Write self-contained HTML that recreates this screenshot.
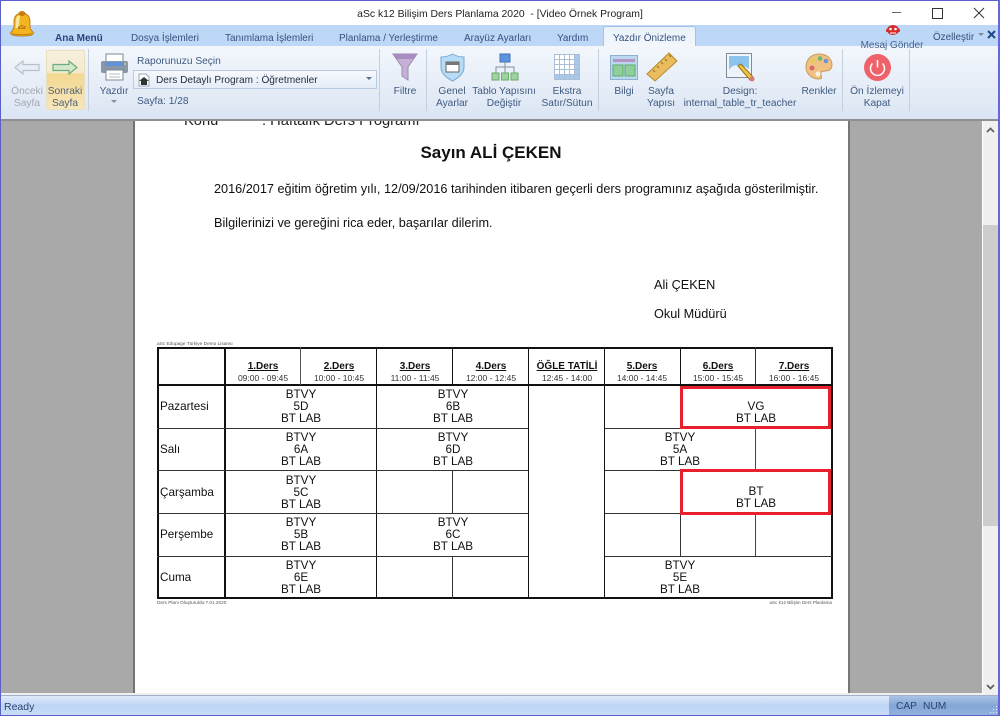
<!DOCTYPE html>
<html lang="tr"><head><meta charset="utf-8"><title>aSc k12</title>
<style>
html,body{margin:0;padding:0;background:#fff}
#w{position:relative;width:1000px;height:716px;overflow:hidden;background:#fff;font-family:"Liberation Sans",sans-serif}
#w div,#w svg{position:absolute}
.t{white-space:nowrap;font-size:10.2px;line-height:12px;color:#3f5a80;margin-top:1px}
.c{transform:translateX(-50%);text-align:center}
.tab{top:33px;font-size:9.95px;line-height:12px;color:#35527d;white-space:nowrap}
.sep{width:1px;background:#c3cfdf;top:49px;height:62px}
.p{color:#111;white-space:nowrap;font-size:12.7px;line-height:14px;margin-top:1px}
.hd{font-weight:bold;text-decoration:underline;font-size:10px;line-height:12px;color:#111;white-space:nowrap;margin-top:1px}
.tm{font-size:8.5px;line-height:10px;color:#333;white-space:nowrap}
.cell{font-size:11.7px;line-height:12px;color:#111;text-align:center;white-space:nowrap;transform:translateX(-50%);margin-top:1px}
.day{font-size:11.7px;line-height:14px;color:#111;left:160px;margin-top:1px}
.bh{background:#111;height:1px}
.bv{background:#111;width:1px}
</style></head><body><div id="w">
<!-- title bar -->
<div style="left:0;top:0;width:1000px;height:25px;background:#fff"></div>
<div class="t" style="left:500px;top:8px;font-size:10.4px;color:#222;transform:translateX(-50%)">aSc k12 Bilişim Ders Planlama 2020&nbsp; - [Video Örnek Program]</div>
<div style="left:892px;top:12px;width:9px;height:1px;background:#666"></div>
<div style="left:932px;top:8px;width:9px;height:9px;border:1px solid #333"></div>
<svg style="left:973px;top:7px" width="12" height="12"><path d="M1 1L11 11M11 1L1 11" stroke="#333" stroke-width="1" fill="none"/></svg>
<!-- tab row -->
<div style="left:1px;top:25px;width:997px;height:21px;background:#bdd7f7"></div>
<!-- ribbon -->
<div style="left:1px;top:46px;width:997px;height:73px;background:linear-gradient(#f3f7fc,#dbe5f3)"></div>
<div style="left:1px;top:119px;width:997px;height:2px;background:#8d8f93"></div>
<!-- active tab -->
<div style="left:603px;top:26px;width:93px;height:20px;background:linear-gradient(#e9f2fc,#f3f7fc);border:1px solid #a7c1e0;border-bottom:none;border-radius:3px 3px 0 0;box-sizing:border-box"></div>
<div class="tab" style="left:55px;font-weight:bold;color:#27477c;font-size:10px">Ana Menü</div>
<div class="tab" style="left:131px">Dosya İşlemleri</div>
<div class="tab" style="left:225px">Tanımlama İşlemleri</div>
<div class="tab" style="left:339px">Planlama / Yerleştirme</div>
<div class="tab" style="left:464px">Arayüz Ayarları</div>
<div class="tab" style="left:557px">Yardım</div>
<div class="tab" style="left:613px">Yazdır Önizleme</div>
<div class="t c" style="left:892px;top:39px;color:#46638c;font-size:10px">Mesaj Gönder</div>
<div class="t" style="left:933px;top:31px;color:#35527d;font-size:9.9px">Özelleştir</div>
<svg style="left:978px;top:33px" width="6" height="4"><path d="M0 0H6L3 3Z" fill="#7a8ba5"/></svg>
<svg style="left:987px;top:30px" width="9" height="9"><path d="M1 1L8 8M8 1L1 8" stroke="#1d4a8c" stroke-width="2"/></svg>
<!-- bell -->
<svg style="left:10px;top:11px" width="24" height="26" viewBox="0 0 24 26"><path d="M12 .5C10 .5 9 1.500 8.500 3C5 4 4 7 4 11V16C4 18.500 2 20 .5 21.500C.5 24.500 5 25 12 25S23.500 24.500 23.500 21.500C22 20 20 18.500 20 16V11C20 7 19 4 15.500 3C15 1.500 14 .5 12 .5Z" fill="#f4b41f" stroke="#b56f06" stroke-width=".8"/><path d="M6 9C6 6 8 4.500 10 4.500L8.500 17H5.500Z" fill="#fde79a"/><ellipse cx="12" cy="3" rx="3" ry="2" fill="#c27c10"/><path d="M2 22.500C6 24 18 24 22 22.500" stroke="#c98410" fill="none"/><text x="12" y="18" font-size="5" text-anchor="middle" fill="#7a4a08" font-family="Liberation Sans">aSc</text></svg>
<!-- Önceki/Sonraki -->
<div style="left:46px;top:50px;width:39px;height:60px;border:1px solid #e9dfbe;box-sizing:border-box;border-radius:2px;background:linear-gradient(#f6f0dd 0,#f3eacc 38%,#f4d890 39%,#f6e6bc 100%)"></div>
<svg style="left:14px;top:60px" width="26" height="15"><path d="M1 7.500L9 1V4.500H25V10.500H9V14Z" fill="#e8edf3" stroke="#b6c1cc" stroke-width="1.200"/></svg>
<svg style="left:52px;top:60px" width="26" height="15"><path d="M25 7.500L17 1V4.500H1V10.500H17V14Z" fill="#d3e7cb" stroke="#6cab83" stroke-width="1.200"/></svg>
<div class="t c" style="left:27px;top:85px;color:#a3a9b0">Önceki</div>
<div class="t c" style="left:27px;top:97px;color:#a3a9b0">Sayfa</div>
<div class="t c" style="left:65px;top:85px;color:#50627a">Sonraki</div>
<div class="t c" style="left:65px;top:97px;color:#50627a">Sayfa</div>
<div class="sep" style="left:88px"></div>
<!-- printer -->
<svg style="left:100px;top:53px" width="29" height="29" viewBox="0 0 29 29"><rect x="6" y="1" width="17" height="9" fill="#fff" stroke="#7e8a98"/><rect x="1" y="8" width="27" height="12" rx="2" fill="#8a97a7"/><rect x="5" y="9" width="19" height="4" fill="#5f93d8"/><circle cx="25" cy="11" r="1" fill="#e8d058"/><rect x="6" y="17" width="17" height="10" fill="#fff" stroke="#7e8a98"/><path d="M9 21H20M9 24H20" stroke="#b4bcc6"/></svg>
<div class="t c" style="left:114px;top:85px">Yazdır</div>
<svg style="left:111px;top:100px" width="6" height="4"><path d="M0 0H6L3 3Z" fill="#7d8da5"/></svg>
<div class="t" style="left:137px;top:55px">Raporunuzu Seçin</div>
<div style="left:133px;top:70px;width:244px;height:19px;background:linear-gradient(#f7f9fd,#e6edf7);border:1px solid #b9cbe2;box-sizing:border-box"></div>
<svg style="left:137px;top:73px" width="14" height="14"><path d="M2 1H9L12 4V13H2Z" fill="#fff" stroke="#9aa8bc"/><path d="M7 4L12 8H10V12H4V8H2Z" fill="#333"/></svg>
<div class="t" style="left:156px;top:74px;color:#1e2b40;font-size:10.1px">Ders Detaylı Program : Öğretmenler</div>
<svg style="left:366px;top:77px" width="6" height="4"><path d="M0 0H6L3 3Z" fill="#5d7291"/></svg>
<div class="t" style="left:137px;top:95px">Sayfa: 1/28</div>
<div class="sep" style="left:379px"></div>
<!-- filtre -->
<svg style="left:391px;top:53px" width="28" height="28"><path d="M2 1H26L17 14V27L11 23V14Z" fill="#c5b0d6" stroke="#9c8ab0"/><path d="M2 1H26L22 6H6Z" fill="#a98cc2"/></svg>
<div class="t c" style="left:405px;top:85px">Filtre</div>
<div class="sep" style="left:426px"></div>
<!-- genel -->
<svg style="left:440px;top:53px" width="25" height="29"><path d="M12.500 1C9 3 5 4 1 4V14C1 21 7 25 12.500 28C18 25 24 21 24 14V4C20 4 16 3 12.500 1Z" fill="#b7dcf5" stroke="#78a6cc"/><rect x="6" y="9" width="13" height="10" fill="#fff" stroke="#666"/><rect x="6" y="9" width="13" height="3" fill="#777"/></svg>
<div class="t c" style="left:452px;top:85px">Genel</div>
<div class="t c" style="left:452px;top:97px">Ayarlar</div>
<!-- tablo -->
<svg style="left:491px;top:53px" width="28" height="28"><rect x="9" y="1" width="10" height="8" fill="#5b93dd" stroke="#3f72b8"/><path d="M14 9V14M5 20V14H23V20M14 14V20" stroke="#8a8f96" fill="none"/><rect x="1" y="20" width="7" height="7" fill="#9fd39f" stroke="#6aaa6a"/><rect x="10.500" y="20" width="7" height="7" fill="#9fd39f" stroke="#6aaa6a"/><rect x="20" y="20" width="7" height="7" fill="#9fd39f" stroke="#6aaa6a"/></svg>
<div class="t c" style="left:504px;top:85px">Tablo Yapısını</div>
<div class="t c" style="left:504px;top:97px">Değiştir</div>
<!-- ekstra -->
<svg style="left:554px;top:54px" width="26" height="26"><rect width="26" height="26" fill="#fff"/><rect x="20" width="6" height="26" fill="#aac8ea"/><rect y="20" width="26" height="6" fill="#aac8ea"/><path d="M.5 0V26M5.500 0V26M10.500 0V26M15.500 0V26M20.500 0V26M25.500 0V26M0 .5H26M0 5.500H26M0 10.500H26M0 15.500H26M0 20.500H26M0 25.500H26" stroke="#a9bfd8" fill="none"/></svg>
<div class="t c" style="left:567px;top:85px">Ekstra</div>
<div class="t c" style="left:567px;top:97px">Satır/Sütun</div>
<div class="sep" style="left:598px"></div>
<!-- bilgi -->
<svg style="left:610px;top:55px" width="28" height="25"><rect x=".5" y=".5" width="27" height="24" fill="#bcd8ef" stroke="#8db1d2"/><rect x="3" y="4" width="22" height="3" fill="#b494c5"/><rect x="3" y="10" width="10" height="11" fill="#8fd09a" stroke="#5fa870"/><rect x="15" y="10" width="10" height="11" fill="#8fd09a" stroke="#5fa870"/></svg>
<div class="t c" style="left:624px;top:85px">Bilgi</div>
<!-- sayfa -->
<svg style="left:646px;top:52px" width="32" height="30"><path d="M1 22L23 1L31 9L9 29Z" fill="#e9bd5e" stroke="#b98a2c"/><path d="M7 18L9 20M11 14L13 16M15 10L17 12M19 7L21 9M23 3L25 5" stroke="#8b6a20"/></svg>
<div class="t c" style="left:661px;top:85px">Sayfa</div>
<div class="t c" style="left:661px;top:97px">Yapısı</div>
<!-- design -->
<svg style="left:726px;top:53px" width="30" height="30"><rect x=".5" y=".5" width="25" height="24" fill="#f3f5f8" stroke="#818b97"/><rect x="3" y="3" width="20" height="19" fill="#8cc4ee"/><path d="M3 17C8 10 12 12 15 15C18 12 20 14 23 16V22H3Z" fill="#eef3f8"/><path d="M12 13L15 11L27 24L24 27Z" fill="#f0c340" stroke="#8d7420"/><circle cx="26" cy="26" r="2.500" fill="#d97a72"/></svg>
<div class="t c" style="left:740px;top:85px">Design:</div>
<div class="t c" style="left:740px;top:97px">internal_table_tr_teacher</div>
<!-- renkler -->
<svg style="left:805px;top:53px" width="28" height="27"><path d="M14 1C6 1 1 7 1 14C1 21 7 26 14 26C17 26 17 24 16 22C15 19 17 18 20 18C24 18 27 16 27 12C27 5 21 1 14 1Z" fill="#efc283" stroke="#c99a58"/><circle cx="7" cy="15" r="2.500" fill="#d66"/><circle cx="8" cy="8" r="2.300" fill="#e4cf54"/><circle cx="15" cy="5.500" r="2.300" fill="#6bb86b"/><circle cx="21" cy="8" r="2.300" fill="#6a94d8"/><circle cx="13" cy="21" r="2.500" fill="#f5f2e8"/></svg>
<div class="t c" style="left:819px;top:85px">Renkler</div>
<div class="sep" style="left:842px"></div>
<!-- kapat -->
<svg style="left:864px;top:54px" width="27" height="27"><circle cx="13.500" cy="13.500" r="13.500" fill="#f0626a"/><path d="M8.500 9.500A7 7 0 1 0 18.500 9.500" stroke="#fff" stroke-width="1.500" fill="none"/><path d="M13.500 6V13.500" stroke="#fff" stroke-width="1.500"/></svg>
<div class="t c" style="left:877px;top:85px">Ön İzlemeyi</div>
<div class="t c" style="left:877px;top:97px">Kapat</div>
<div class="sep" style="left:909px"></div>
<!-- mesaj icon -->
<svg style="left:885px;top:24px" width="16" height="12"><ellipse cx="8" cy="6" rx="6" ry="5" fill="#d62b2b"/><rect x="1" y="5" width="14" height="3" rx="1" fill="#d62b2b"/><circle cx="5.500" cy="5" r="1.300" fill="#fff"/><circle cx="10.500" cy="5" r="1.300" fill="#fff"/><path d="M5 9H11" stroke="#fff"/></svg>
<!-- work area -->
<div style="left:1px;top:121px;width:981px;height:572px;background:#a9a9a9"></div>
<div style="left:133px;top:121px;width:2px;height:572px;background:#737373"></div>
<div style="left:135px;top:121px;width:713px;height:572px;background:#fff"></div>
<div style="left:848px;top:121px;width:2px;height:572px;background:#767676"></div>
<div style="left:1px;top:693px;width:981px;height:2px;background:#f0f0f0"></div>
<!-- scrollbar -->
<div style="left:982px;top:121px;width:16px;height:574px;background:#f0f0f0;border-left:1px solid #fff;box-sizing:border-box"></div>
<div style="left:983px;top:225px;width:15px;height:301px;background:#cdcdcd"></div>
<svg style="left:986px;top:127px" width="9" height="6"><path d="M1 5L4.500 1.500L8 5" stroke="#606060" stroke-width="1.700" fill="none"/></svg>
<svg style="left:986px;top:684px" width="9" height="6"><path d="M1 1L4.500 4.500L8 1" stroke="#606060" stroke-width="1.700" fill="none"/></svg>
<!-- page text: clipped top line -->
<div style="left:135px;top:121px;width:713px;height:20px;overflow:hidden">
<div style="left:49px;top:-8px;font-size:14.7px;line-height:16px;color:#222;white-space:nowrap">Konu</div>
<div style="left:127px;top:-8px;font-size:14.7px;line-height:16px;color:#222;white-space:nowrap">: Haftalık Ders Programı</div>
</div>
<div style="left:491px;top:144px;transform:translateX(-50%);font-size:17px;line-height:18px;font-weight:bold;color:#111;white-space:nowrap">Sayın ALİ ÇEKEN</div>
<div class="p" style="left:214px;top:181px">2016/2017 eğitim öğretim yılı, 12/09/2016 tarihinden itibaren geçerli ders programınız aşağıda gösterilmiştir.</div>
<div class="p" style="left:214px;top:215px">Bilgilerinizi ve gereğini rica eder, başarılar dilerim.</div>
<div class="p" style="left:654px;top:277px">Ali ÇEKEN</div>
<div class="p" style="left:654px;top:306px">Okul Müdürü</div>
<div style="left:157px;top:342px;font-size:4.75px;line-height:5px;color:#555;white-space:nowrap">aSc Edupage Türkiye Demo Lisansı</div>
<div style="left:157px;top:600px;font-size:4.7px;line-height:5px;color:#555;white-space:nowrap">Ders Planı Oluşturuldu:7.01.2020</div>
<div style="left:832px;top:600px;font-size:4.6px;line-height:5px;color:#555;white-space:nowrap;transform:translateX(-100%)">aSc k12 Bilişim Ders Planlama</div>
<!-- table lines -->
<div style="left:157px;top:347px;width:676px;height:252px;border:2px solid #111;box-sizing:border-box"></div>
<div class="bh" style="left:157px;top:384px;width:675px;height:2px"></div>
<div class="bv" style="left:224px;top:347px;height:252px;width:2px"></div>
<div class="bv" style="left:300px;top:347px;height:38px;background:#555"></div>
<div class="bv" style="left:376px;top:347px;height:252px"></div>
<div class="bv" style="left:452px;top:347px;height:38px"></div>
<div class="bv" style="left:452px;top:470px;height:43px;background:#333"></div>
<div class="bv" style="left:452px;top:556px;height:43px;background:#333"></div>
<div class="bv" style="left:528px;top:347px;height:252px"></div>
<div class="bv" style="left:604px;top:347px;height:252px"></div>
<div class="bv" style="left:680px;top:347px;height:38px"></div>
<div class="bv" style="left:680px;top:513px;height:43px;background:#333"></div>
<div class="bv" style="left:755px;top:347px;height:38px;background:#333"></div>
<div class="bv" style="left:755px;top:428px;height:42px;background:#444"></div>
<div class="bv" style="left:755px;top:513px;height:43px;background:#444"></div>
<div class="bh" style="left:157px;top:428px;width:371px;background:#333"></div>
<div class="bh" style="left:605px;top:428px;width:227px;background:#333"></div>
<div class="bh" style="left:157px;top:470px;width:371px;background:#333"></div>
<div class="bh" style="left:605px;top:470px;width:227px;background:#333"></div>
<div class="bh" style="left:157px;top:513px;width:371px;background:#333"></div>
<div class="bh" style="left:605px;top:513px;width:227px;background:#333"></div>
<div class="bh" style="left:157px;top:556px;width:371px;background:#333"></div>
<div class="bh" style="left:605px;top:556px;width:227px;background:#333"></div>
<!-- red boxes -->
<div style="left:680px;top:386px;width:151px;height:43px;border:3px solid #e8202e;box-sizing:border-box"></div>
<div style="left:680px;top:469px;width:151px;height:46px;border:3px solid #e8202e;box-sizing:border-box"></div>
<!-- header -->
<div class="hd c" style="left:263px;top:360px">1.Ders</div><div class="tm c" style="left:263px;top:373px">09:00 - 09:45</div>
<div class="hd c" style="left:339px;top:360px">2.Ders</div><div class="tm c" style="left:339px;top:373px">10:00 - 10:45</div>
<div class="hd c" style="left:415px;top:360px">3.Ders</div><div class="tm c" style="left:415px;top:373px">11:00 - 11:45</div>
<div class="hd c" style="left:491px;top:360px">4.Ders</div><div class="tm c" style="left:491px;top:373px">12:00 - 12:45</div>
<div class="hd c" style="left:567px;top:360px">ÖĞLE TATİLİ</div><div class="tm c" style="left:567px;top:373px">12:45 - 14:00</div>
<div class="hd c" style="left:642px;top:360px">5.Ders</div><div class="tm c" style="left:642px;top:373px">14:00 - 14:45</div>
<div class="hd c" style="left:718px;top:360px">6.Ders</div><div class="tm c" style="left:718px;top:373px">15:00 - 15:45</div>
<div class="hd c" style="left:794px;top:360px">7.Ders</div><div class="tm c" style="left:794px;top:373px">16:00 - 16:45</div>
<!-- days -->
<div class="day" style="top:399px">Pazartesi</div>
<div class="day" style="top:442px">Salı</div>
<div class="day" style="top:485px">Çarşamba</div>
<div class="day" style="top:527px">Perşembe</div>
<div class="day" style="top:570px">Cuma</div>
<!-- cells -->
<div class="cell" style="left:301px;top:388px">BTVY<br>5D<br>BT LAB</div>
<div class="cell" style="left:453px;top:388px">BTVY<br>6B<br>BT LAB</div>
<div class="cell" style="left:756px;top:400px">VG<br>BT LAB</div>
<div class="cell" style="left:301px;top:431px">BTVY<br>6A<br>BT LAB</div>
<div class="cell" style="left:453px;top:431px">BTVY<br>6D<br>BT LAB</div>
<div class="cell" style="left:680px;top:431px">BTVY<br>5A<br>BT LAB</div>
<div class="cell" style="left:301px;top:474px">BTVY<br>5C<br>BT LAB</div>
<div class="cell" style="left:756px;top:485px">BT<br>BT LAB</div>
<div class="cell" style="left:301px;top:516px">BTVY<br>5B<br>BT LAB</div>
<div class="cell" style="left:453px;top:516px">BTVY<br>6C<br>BT LAB</div>
<div class="cell" style="left:301px;top:559px">BTVY<br>6E<br>BT LAB</div>
<div class="cell" style="left:680px;top:559px">BTVY<br>5E<br>BT LAB</div>
<!-- status bar -->
<div style="left:1px;top:695px;width:997px;height:20px;background:linear-gradient(#dfeafb,#bfd5f5 50%,#c9dcf7);border-top:1px solid #9fb0c8;box-sizing:border-box"></div>
<div style="left:889px;top:696px;width:109px;height:19px;background:linear-gradient(#a9c3e6,#84a6d6 50%,#92b2dd)"></div>
<svg style="left:989px;top:705px" width="9" height="10"><path d="M7 1h1v1H7zM4 4h1v1H4zM7 4h1v1H7zM1 7h1v1H1zM4 7h1v1H4zM7 7h1v1H7z" fill="#eef4fc"/></svg>
<div class="t" style="left:4px;top:700px;color:#2d4470;font-size:10.5px">Ready</div>
<div class="t" style="left:896px;top:700px;color:#2d4470;font-size:10.2px">CAP</div>
<div class="t" style="left:923px;top:700px;color:#2d4470;font-size:10.2px">NUM</div>
<!-- window border -->
<div style="left:0;top:0;width:1000px;height:1px;background:#5a5fd0"></div>
<div style="left:0;top:0;width:1px;height:716px;background:#5a5fc8"></div>
<div style="left:998px;top:0;width:2px;height:716px;background:#6468dc"></div>
<div style="left:0;top:715px;width:1000px;height:1px;background:#5a5fc8"></div>
</div></body></html>
